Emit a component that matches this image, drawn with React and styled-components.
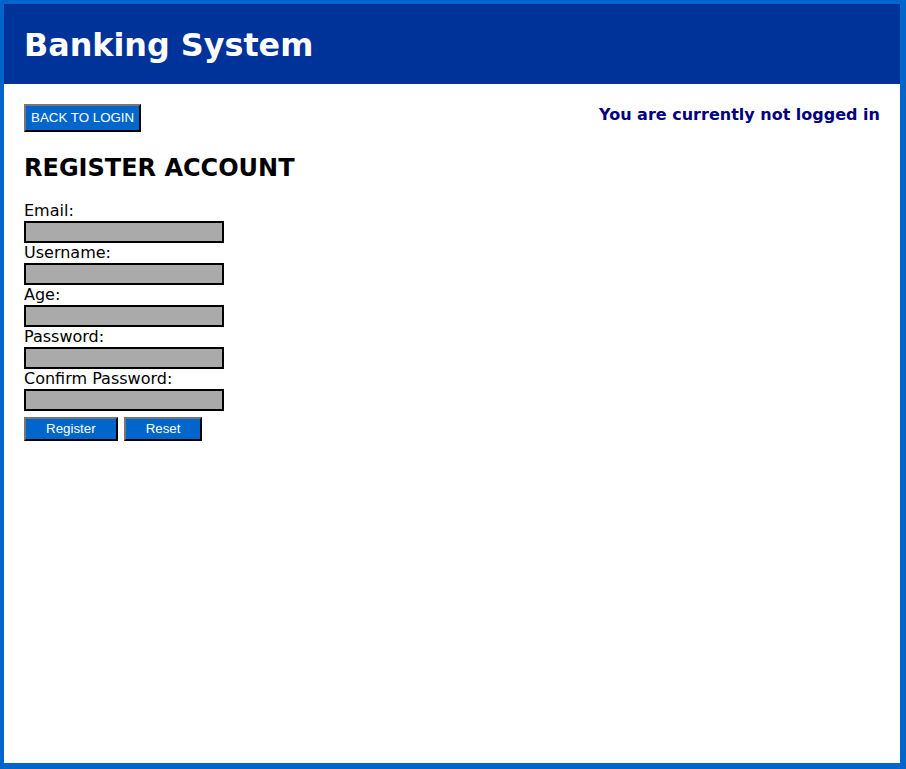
import React from "react";
import styled, { createGlobalStyle } from "styled-components";

const Global = createGlobalStyle`
  html, body { margin: 0; padding: 0; background: #fff; }
  body { font-family: "DejaVu Sans", Verdana, sans-serif; }
  * { box-sizing: border-box; }
`;

const Frame = styled.div`
  width: 906px;
  height: 769px;
  border-style: solid;
  border-color: #0066cc;
  border-width: 4px 6px 6px 4px;
  display: flex;
  flex-direction: column;
  background: #fff;
`;

const Header = styled.header`
  height: 80px;
  background: #003399;
  display: flex;
  align-items: center;
  padding: 0 20px;
`;

const Title = styled.h1`
  margin: 0;
  color: #fff;
  font-family: "DejaVu Sans", Verdana, sans-serif;
  font-weight: bold;
  font-size: 31.8px;
  padding-top: 1px;
`;

const Main = styled.main`
  padding: 20px 20px;
`;

const TopRow = styled.div`
  display: flex;
  justify-content: space-between;
  align-items: flex-start;
`;

const Button = styled.button`
  background: #0066cc;
  color: #fff;
  font-family: "Liberation Sans", Arial, sans-serif;
  font-size: 13.33px;
  height: ${(p) => (p.$small ? "24px" : "28px")};
  padding: ${(p) => (p.$small ? "0 20px" : "0 5px")};
  border: 2px outset #777;
  border-color: #767676 #222 #222 #767676;
  margin: 0;
  cursor: pointer;
  line-height: 1;
`;

const Status = styled.div`
  color: #000080;
  font-weight: bold;
  font-size: 16px;
  margin-top: 1px;
`;

const Heading = styled.h2`
  margin: 22px 0 0;
  font-size: 24px;
  font-weight: bold;
  color: #000;
  line-height: 28px;
`;

const Form = styled.form`
  margin-top: 19px;
  display: flex;
  flex-direction: column;
`;

const Label = styled.label`
  font-size: 16px;
  line-height: 20px;
  color: #000;
`;

const Input = styled.input`
  width: 200px;
  height: 22px;
  background: #aaaaaa;
  border: 2px solid #000;
  margin: 0;
  padding: 0 3px;
  font-size: 13px;
  outline: none;
`;

const Actions = styled.div`
  display: flex;
  gap: 6px;
  margin-top: 6px;
`;

const fields = ["Email:", "Username:", "Age:", "Password:", "Confirm Password:"];

export default function App() {
  return (
    <>
      <Global />
      <Frame>
        <Header>
          <Title>Banking System</Title>
        </Header>
        <Main>
          <TopRow>
            <Button type="button">BACK TO LOGIN</Button>
            <Status>You are currently not logged in</Status>
          </TopRow>
          <Heading>REGISTER ACCOUNT</Heading>
          <Form onSubmit={(e) => e.preventDefault()}>
            {fields.map((f) => (
              <React.Fragment key={f}>
                <Label>{f}</Label>
                <Input type={f.includes("Password") ? "password" : "text"} />
              </React.Fragment>
            ))}
            <Actions>
              <Button $small type="submit">Register</Button>
              <Button $small type="reset">Reset</Button>
            </Actions>
          </Form>
        </Main>
      </Frame>
    </>
  );
}
